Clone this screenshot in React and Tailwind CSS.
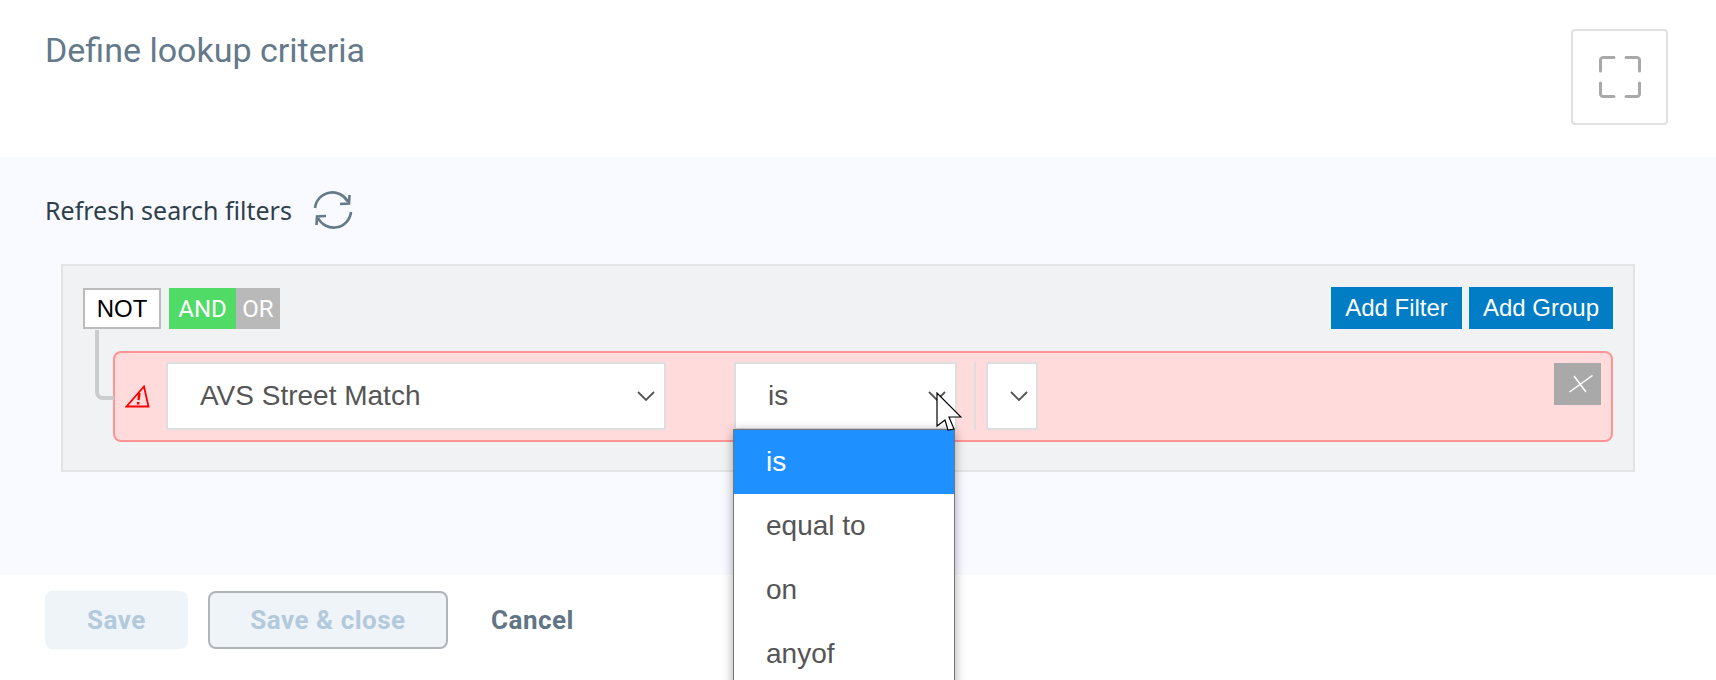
import React from "react";

const arial = "font-['Liberation_Sans',Arial,sans-serif]";

function Chevron({ className }) {
  return (
    <svg width="18" height="10" viewBox="0 0 18 10" fill="none" className={className}>
      <path d="M1 1l8 8 8-8" stroke="#555" strokeWidth="1.8" />
    </svg>
  );
}

function RefreshIcon() {
  return (
    <svg width="40" height="40" viewBox="0 0 40 40" fill="none" stroke="#64798a" strokeWidth="2.6">
      <path d="M2 18A17.5 17.5 0 0 1 35 12" />
      <path d="M27 14l9 -0.5l0.5 -8.5" />
      <path d="M38 22A17.5 17.5 0 0 1 5 28" />
      <path d="M13 26l-9 0.5l-0.5 8.5" />
    </svg>
  );
}

function ExpandIcon() {
  return (
    <svg width="42" height="42" viewBox="0 0 42 42" fill="none" stroke="#a9a9a9" strokeWidth="3" strokeLinecap="round">
      <path d="M1.5 15V4a2.5 2.5 0 0 1 2.500-2.500H15" />
      <path d="M27 1.500h11a2.500 2.500 0 0 1 2.500 2.500V15" />
      <path d="M1.500 27v11a2.500 2.500 0 0 0 2.500 2.500H15" />
      <path d="M27 40.500h11a2.500 2.500 0 0 0 2.500-2.500V27" />
    </svg>
  );
}

function AlertIcon() {
  return (
    <svg width="25" height="23" viewBox="0 0 25 23" fill="none" stroke="#f00" strokeWidth="1.800" className="mt-[23px] shrink-0">
      <path d="M1.500 21.500L19 1.500l4.500 20z" />
      <path d="M14.500 8l-1 7" strokeWidth="2.400" />
      <path d="M13.200 17v2.500" strokeWidth="2.400" />
    </svg>
  );
}

function CloseIcon() {
  return (
    <svg width="24" height="18" viewBox="0 0 24 18" fill="none" stroke="#fff" strokeWidth="1.500" className="ml-[6px]">
      <path d="M0.500 17L23.500 0.500M5 1l12 16" />
    </svg>
  );
}

function Cursor() {
  return (
    <svg width="26" height="40" viewBox="0 0 26 40" className="absolute left-[936px] top-[392px]">
      <path d="M1 1v33l8-6 3 10 6-1-5-12h12z" fill="#fff" stroke="#000" strokeWidth="1.200" />
    </svg>
  );
}

function Select({ children, className }) {
  return (
    <div className={`flex h-[68px] shrink-0 items-center border-2 border-[#dedede] bg-white text-[28px] text-[#555] ${arial} ${className}`}>
      {children}
      <Chevron />
    </div>
  );
}

function RuleRow() {
  return (
    <div className="relative ml-[30px] mt-[22px] flex h-[91px] rounded-lg border-2 border-[#ff9494] bg-[#ffdbdb] px-[10px] pt-[9px]">
      <div className="absolute left-[-20px] top-[-23px] h-[70px] w-[19px] rounded-bl-lg border-b-4 border-l-4 border-[#ccc]" />
      <AlertIcon />
      <Select className="ml-[16px] w-[500px] justify-between pl-[32px] pr-[9px]">AVS Street Match</Select>
      <Select className="ml-[68px] w-[223px] justify-between pl-[32px] pr-[9px]">is</Select>
      <div className="ml-[17px] h-[68px] w-[2px] shrink-0 bg-[#dedede]" />
      <Select className="ml-[10px] w-[52px] pl-[22px]" />
      <button className="ml-auto mt-px flex h-[42px] w-[47px] items-center justify-center bg-[#a9a9a9]">
        <CloseIcon />
      </button>
    </div>
  );
}

export default function App() {
  const options = ["equal to", "on", "anyof"];

  return (
    <div className="relative h-[680px] w-full overflow-hidden bg-white">
      {/* Header */}
      <div className="flex h-[157px] items-start justify-between pl-[45px] pr-[48px] pt-[29px]">
        <h1 className="font-['Roboto',sans-serif] text-[34px] leading-[42px] text-[#64798a]">Define lookup criteria</h1>
        <button className="flex h-[96px] w-[97px] items-center justify-center rounded border-2 border-[#e0e0e0] bg-white">
          <ExpandIcon />
        </button>
      </div>

      {/* Criteria */}
      <div className="h-[418px] bg-[#f8faff] pl-[45px] pt-[33px]">
        <div className="flex h-[40px] items-center gap-[21px]">
          <span className="mt-px font-['Noto_Sans',sans-serif] text-[25px] text-[#2f3e4b]">Refresh search filters</span>
          <RefreshIcon />
        </div>

        <div className="ml-[16px] mt-[34px] h-[208px] w-[1574px] border-2 border-[#e3e4e6] bg-[#f1f2f4] px-[20px] pt-[22px]">
          <div className="flex h-[41px] items-start">
            <button className={`h-[41px] w-[78px] border-2 border-[#bbb] bg-white text-[24px] text-black ${arial}`}>NOT</button>
            <button className="ml-[8px] h-[41px] w-[67px] bg-[#4fdb66] font-['Roboto',sans-serif] text-[24px] text-white">AND</button>
            <button className="h-[41px] w-[44px] bg-[#b9b9b9] font-['Roboto',sans-serif] text-[24px] text-white">OR</button>
            <button className={`-mt-px ml-auto h-[42px] w-[131px] bg-[#007dc5] text-[24px] text-white ${arial}`}>Add Filter</button>
            <button className={`-mt-px ml-[7px] h-[42px] w-[144px] bg-[#007dc5] text-[24px] text-white ${arial}`}>Add Group</button>
          </div>
          <RuleRow />
        </div>
      </div>

      {/* Footer */}
      <div className="flex items-start pl-[45px] pt-[16px] font-['Roboto',sans-serif] text-[26px] font-bold tracking-[0.5px]">
        <button className="h-[58px] w-[143px] rounded-lg bg-[#eff4f8] text-[#b3c9dc]">Save</button>
        <button className="ml-[20px] h-[58px] w-[240px] rounded-lg border-2 border-[#b0b5ba] bg-[#eff4f8] text-[#b3c9dc]">Save &amp; close</button>
        <button className="ml-[43px] h-[58px] text-[#627585]">Cancel</button>
      </div>

      {/* Open dropdown */}
      <div className={`absolute bottom-[-8px] left-[733px] top-[429px] w-[222px] border border-[#777] bg-white text-[28px] text-[#555] shadow-[0_2px_10px_rgba(0,0,0,0.35)] ${arial}`}>
        <div className="flex h-[64px] items-center bg-[#1e90ff] pl-[32px] text-white">is</div>
        {options.map((o) => (
          <div key={o} className="flex h-[64px] items-center pl-[32px]">{o}</div>
        ))}
      </div>
      <Cursor />
    </div>
  );
}
